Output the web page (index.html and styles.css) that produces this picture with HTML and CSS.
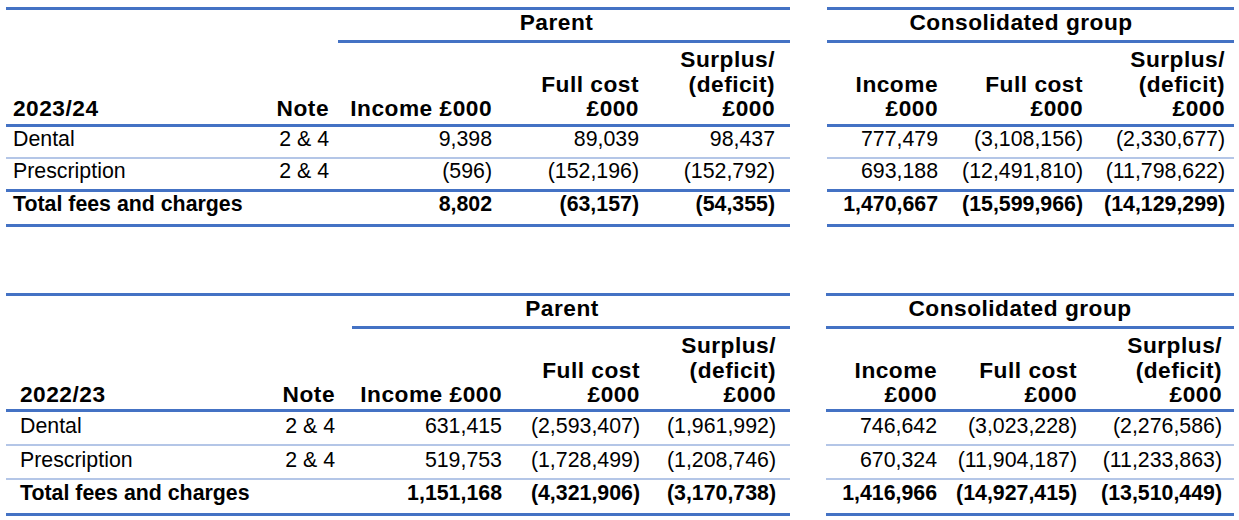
FILE: index.html
```html
<!DOCTYPE html>
<html lang="en">
<head>
<meta charset="utf-8">
<title>Fees and charges</title>
<link rel="stylesheet" href="styles.css">
</head>
<body>
<div class="page">
  <section class="block block-a">
    <table class="t t-parent t-one">
      <colgroup>
        <col class="c-lbl"><col class="c-note"><col class="c-inc"><col class="c-full"><col class="c-sur">
      </colgroup>
      <tr class="r-group">
        <td class="blank" colspan="2"></td>
        <th class="grp" colspan="3">Parent</th>
      </tr>
      <tr class="r-head">
        <th class="lbl">2023/24</th>
        <th class="note">Note</th>
        <th class="num">Income £000</th>
        <th class="num">Full cost<br>£000</th>
        <th class="num last">Surplus/<br>(deficit)<br>£000</th>
      </tr>
      <tr class="r-data r-light">
        <td class="lbl">Dental</td><td class="note">2 &amp; 4</td>
        <td class="num">9,398</td><td class="num">89,039</td><td class="num last">98,437</td>
      </tr>
      <tr class="r-data r-thick">
        <td class="lbl">Prescription</td><td class="note">2 &amp; 4</td>
        <td class="num">(596)</td><td class="num">(152,196)</td><td class="num last">(152,792)</td>
      </tr>
      <tr class="r-total">
        <td class="lbl">Total fees and charges</td><td class="note"></td>
        <td class="num">8,802</td><td class="num">(63,157)</td><td class="num last">(54,355)</td>
      </tr>
    </table>
    <table class="t t-group t-one">
      <colgroup>
        <col class="g-inc"><col class="g-full"><col class="g-sur">
      </colgroup>
      <tr class="r-group">
        <th class="grp" colspan="3">Consolidated group</th>
      </tr>
      <tr class="r-head">
        <th class="num">Income<br>£000</th>
        <th class="num">Full cost<br>£000</th>
        <th class="num last">Surplus/<br>(deficit)<br>£000</th>
      </tr>
      <tr class="r-data r-light">
        <td class="num">777,479</td><td class="num">(3,108,156)</td><td class="num last">(2,330,677)</td>
      </tr>
      <tr class="r-data r-thick">
        <td class="num">693,188</td><td class="num">(12,491,810)</td><td class="num last">(11,798,622)</td>
      </tr>
      <tr class="r-total">
        <td class="num">1,470,667</td><td class="num">(15,599,966)</td><td class="num last">(14,129,299)</td>
      </tr>
    </table>
  </section>

  <section class="block block-b">
    <table class="t t-parent t-two">
      <colgroup>
        <col class="c-lbl"><col class="c-note"><col class="c-inc"><col class="c-full"><col class="c-sur">
      </colgroup>
      <tr class="r-group">
        <td class="blank" colspan="2"></td>
        <th class="grp" colspan="3">Parent</th>
      </tr>
      <tr class="r-head">
        <th class="lbl">2022/23</th>
        <th class="note">Note</th>
        <th class="num">Income £000</th>
        <th class="num">Full cost<br>£000</th>
        <th class="num last">Surplus/<br>(deficit)<br>£000</th>
      </tr>
      <tr class="r-data r-light">
        <td class="lbl">Dental</td><td class="note">2 &amp; 4</td>
        <td class="num">631,415</td><td class="num">(2,593,407)</td><td class="num last">(1,961,992)</td>
      </tr>
      <tr class="r-data r-light">
        <td class="lbl">Prescription</td><td class="note">2 &amp; 4</td>
        <td class="num">519,753</td><td class="num">(1,728,499)</td><td class="num last">(1,208,746)</td>
      </tr>
      <tr class="r-total">
        <td class="lbl">Total fees and charges</td><td class="note"></td>
        <td class="num">1,151,168</td><td class="num">(4,321,906)</td><td class="num last">(3,170,738)</td>
      </tr>
    </table>
    <table class="t t-group t-two">
      <colgroup>
        <col class="g-inc"><col class="g-full"><col class="g-sur">
      </colgroup>
      <tr class="r-group">
        <th class="grp" colspan="3">Consolidated group</th>
      </tr>
      <tr class="r-head">
        <th class="num">Income<br>£000</th>
        <th class="num">Full cost<br>£000</th>
        <th class="num last">Surplus/<br>(deficit)<br>£000</th>
      </tr>
      <tr class="r-data r-light">
        <td class="num">746,642</td><td class="num">(3,023,228)</td><td class="num last">(2,276,586)</td>
      </tr>
      <tr class="r-data r-light">
        <td class="num">670,324</td><td class="num">(11,904,187)</td><td class="num last">(11,233,863)</td>
      </tr>
      <tr class="r-total">
        <td class="num">1,416,966</td><td class="num">(14,927,415)</td><td class="num last">(13,510,449)</td>
      </tr>
    </table>
  </section>
</div>
</body>
</html>
```

FILE: styles.css
```css
html, body {
  margin: 0;
  padding: 0;
  background: #ffffff;
}

body {
  font-family: "Liberation Sans", Arial, sans-serif;
  color: #000000;
  font-size: 21.33px;
}

.page {
  display: flex;
  flex-direction: column;
  padding-left: 6px;
}

.block {
  display: flex;
  align-items: flex-start;
}

.block-a {
  margin-top: 7px;
  gap: 37px;
}

.block-b {
  margin-top: 66px;
  gap: 36px;
}

.t {
  border-collapse: separate;
  border-spacing: 0;
  table-layout: fixed;
}

.t td, .t th {
  padding: 0;
  line-height: 24.5px;
  white-space: nowrap;
  overflow: visible;
}

.t th {
  font-weight: bold;
  font-size: 22.7px;
  letter-spacing: 0.5px;
}

/* widths */
.t-parent { width: 784px; }
.t-group.t-one { width: 407px; }
.t-group.t-two { width: 408px; }

.t-one .c-lbl { width: 264px; }
.t-one .c-note { width: 68px; }
.t-one .c-inc { width: 162px; }
.t-one .c-full { width: 147px; }
.t-one .c-sur { width: 143px; }

.t-two .c-lbl { width: 269px; }
.t-two .c-note { width: 77px; }
.t-two .c-inc { width: 158px; }
.t-two .c-full { width: 138px; }
.t-two .c-sur { width: 142px; }

.t-one .g-inc { width: 119px; }
.t-one .g-full { width: 145px; }
.t-one .g-sur { width: 143px; }

.t-two .g-inc { width: 119px; }
.t-two .g-full { width: 140px; }
.t-two .g-sur { width: 149px; }

/* alignment */
.lbl { text-align: left; }
.note, .num { text-align: right; }

.num { padding-right: 8px !important; }
.t-parent.t-one .num.last { padding-right: 15px !important; }
.t-parent.t-two .num.last { padding-right: 14px !important; }
.t-group.t-one .num.last { padding-right: 9px !important; }
.t-group.t-two .num.last { padding-right: 12px !important; }

.t-one .lbl { padding-left: 7px; }
.t-two .lbl { padding-left: 14px; }
.t-one .note { padding-right: 9px; }
.t-two .note { padding-right: 17px; }

/* group row */
.r-group td, .r-group th {
  border-top: 3px solid #4472c4;
  vertical-align: top;
  padding-bottom: 5.5px;
}
.r-group .grp {
  text-align: center;
  border-bottom: 3px solid #4472c4;
}
.t-parent.t-one .grp { padding-right: 15px; }
.t-parent.t-two .grp { padding-right: 18px; }
.t-group.t-one .grp { padding-right: 19px; }
.t-group.t-two .grp { padding-right: 20px; }

/* header row */
.r-head th {
  vertical-align: bottom;
  border-bottom: 3px solid #4472c4;
  padding-top: 4px;
  padding-bottom: 3.5px;
}
.t-two .r-head th { padding-bottom: 2.5px; }

/* data rows */
.r-data td {
  vertical-align: top;
  padding-top: 0;
  padding-bottom: 5.5px;
}
.t-two .r-data td {
  padding-top: 1.5px;
  padding-bottom: 6px;
}
.r-light td { border-bottom: 2px solid #b4c6e7; }
.r-thick td { border-bottom: 3px solid #4472c4; }

/* total row */
.r-total td {
  font-weight: bold;
  vertical-align: top;
  padding-top: 0;
  padding-bottom: 7.5px;
  border-bottom: 3px solid #4472c4;
}
.t-two .r-total td {
  padding-top: 0.5px;
  padding-bottom: 8px;
}
```
